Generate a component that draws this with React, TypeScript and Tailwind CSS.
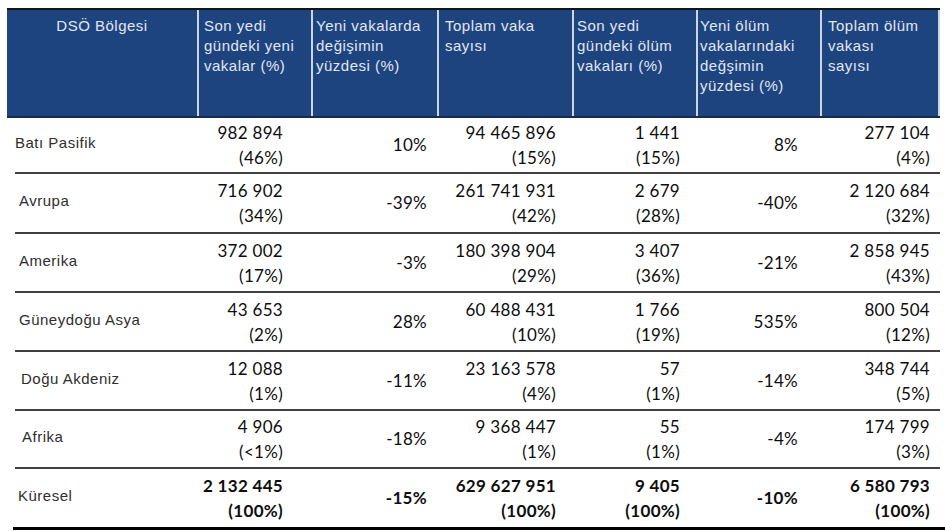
import React from "react";

type Row = {
  region: string;
  indent: string;
  height: string;
  newCases: [string, string];
  newChange: string;
  totalCases: [string, string];
  newDeaths: [string, string];
  deathChange: string;
  totalDeaths: [string, string];
  bold?: boolean;
};

const rows: Row[] = [
  {
    region: "Batı Pasifik",
    indent: "pl-0",
    height: "h-[56px]",
    newCases: ["982 894", "(46%)"],
    newChange: "10%",
    totalCases: ["94 465 896", "(15%)"],
    newDeaths: ["1 441", "(15%)"],
    deathChange: "8%",
    totalDeaths: ["277 104", "(4%)"],
  },
  {
    region: "Avrupa",
    indent: "pl-1",
    height: "h-[60px]",
    newCases: ["716 902", "(34%)"],
    newChange: "-39%",
    totalCases: ["261 741 931", "(42%)"],
    newDeaths: ["2 679", "(28%)"],
    deathChange: "-40%",
    totalDeaths: ["2 120 684", "(32%)"],
  },
  {
    region: "Amerika",
    indent: "pl-1",
    height: "h-[59px]",
    newCases: ["372 002", "(17%)"],
    newChange: "-3%",
    totalCases: ["180 398 904", "(29%)"],
    newDeaths: ["3 407", "(36%)"],
    deathChange: "-21%",
    totalDeaths: ["2 858 945", "(43%)"],
  },
  {
    region: "Güneydoğu Asya",
    indent: "pl-1",
    height: "h-[59px]",
    newCases: ["43 653", "(2%)"],
    newChange: "28%",
    totalCases: ["60 488 431", "(10%)"],
    newDeaths: ["1 766", "(19%)"],
    deathChange: "535%",
    totalDeaths: ["800 504", "(12%)"],
  },
  {
    region: "Doğu Akdeniz",
    indent: "pl-[6px]",
    height: "h-[59px]",
    newCases: ["12 088", "(1%)"],
    newChange: "-11%",
    totalCases: ["23 163 578", "(4%)"],
    newDeaths: ["57", "(1%)"],
    deathChange: "-14%",
    totalDeaths: ["348 744", "(5%)"],
  },
  {
    region: "Afrika",
    indent: "pl-[7px]",
    height: "h-[58px]",
    newCases: ["4 906", "(<1%)"],
    newChange: "-18%",
    totalCases: ["9 368 447", "(1%)"],
    newDeaths: ["55", "(1%)"],
    deathChange: "-4%",
    totalDeaths: ["174 799", "(3%)"],
  },
  {
    region: "Küresel",
    indent: "pl-[3px]",
    height: "h-[58px]",
    newCases: ["2 132 445", "(100%)"],
    newChange: "-15%",
    totalCases: ["629 627 951", "(100%)"],
    newDeaths: ["9 405", "(100%)"],
    deathChange: "-10%",
    totalDeaths: ["6 580 793", "(100%)"],
    bold: true,
  },
];

const headers: { lines: string[]; className: string }[] = [
  { lines: ["DSÖ Bölgesi"], className: "text-center" },
  { lines: ["Son yedi", "gündeki yeni", "vakalar (%)"], className: "border-l-2 pl-[5px]" },
  { lines: ["Yeni vakalarda", "değişimin", "yüzdesi (%)"], className: "border-l-2 pl-[3px]" },
  { lines: ["Toplam vaka", "sayısı"], className: "border-l-2 pl-[6px]" },
  { lines: ["Son yedi", "gündeki ölüm", "vakaları (%)"], className: "border-l-2 pl-[3px]" },
  { lines: ["Yeni ölüm", "vakalarındaki", "değşimin", "yüzdesi (%)"], className: "border-l-2 pl-[2px]" },
  { lines: ["Toplam ölüm", "vakası", "sayısı"], className: "border-l-2 border-r-2 pl-[6px]" },
];

function Pair({ value, pr, bold }: { value: [string, string]; pr: string; bold?: boolean }) {
  return (
    <div className={`flex flex-col items-end justify-center leading-[25px] ${pr} ${bold ? "font-bold" : ""}`}>
      <span>{value[0]}</span>
      <span>{value[1]}</span>
    </div>
  );
}

function Single({ value, pr, bold }: { value: string; pr: string; bold?: boolean }) {
  return (
    <div className={`flex items-center justify-end ${pr} ${bold ? "font-bold" : ""}`}>
      {value}
    </div>
  );
}

export default function App() {
  return (
    <div className="w-[945px] h-[531px] bg-white overflow-hidden">
      <div className="pt-[8px]">
        {/* header */}
        <div className="ml-[7px] w-[933px] border-t-2 border-[#141414]">
          <div
            className="grid grid-cols-[190px_114px_126px_135px_124px_124px_120px] h-[108px] bg-[#1e4480] border-b-2 border-[#142c55] text-[#e2e6ee] text-[15px] leading-[20px] tracking-[0.5px]"
            style={{ fontFamily: '"Liberation Sans", Arial, sans-serif' }}
          >
            {headers.map((h, i) => (
              <div key={i} className={`pt-[6px] border-[#cdd5e1] ${h.className}`}>
                {h.lines.map((l) => (
                  <div key={l}>{l}</div>
                ))}
              </div>
            ))}
          </div>
        </div>

        {/* body */}
        <div className="ml-[15px] w-[925px]">
          {rows.map((r, i) => (
            <div
              key={r.region}
              className={`grid grid-cols-[182px_114px_126px_135px_124px_124px_120px] ${r.height} ${
                i < rows.length - 1 ? "border-b-2 border-[#404040]" : ""
              } text-[17px] text-[#0d0d0d] tracking-[0.3px]`}
              style={{ fontFamily: "Lato, 'Open Sans', sans-serif" }}
            >
              <div
                className={`flex items-center pb-[3px] text-[15px] text-[#2e2e2e] tracking-[0.5px] ${r.indent}`}
                style={{ fontFamily: '"Liberation Sans", Arial, sans-serif' }}
              >
                {r.region}
              </div>
              <Pair value={r.newCases} pr="pr-[28px]" bold={r.bold} />
              <Single value={r.newChange} pr="pr-[10px]" bold={r.bold} />
              <Pair value={r.totalCases} pr="pr-[16px]" bold={r.bold} />
              <Pair value={r.newDeaths} pr="pr-[16px]" bold={r.bold} />
              <Single value={r.deathChange} pr="pr-[22px]" bold={r.bold} />
              <Pair value={r.totalDeaths} pr="pr-[10px]" bold={r.bold} />
            </div>
          ))}
        </div>
        <div className="ml-[13px] w-[932px] h-[3px] bg-black" />
      </div>
    </div>
  );
}
